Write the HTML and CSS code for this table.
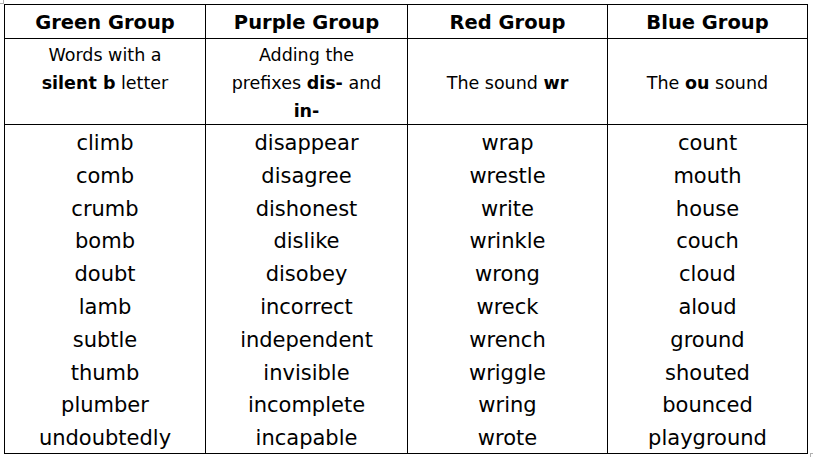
FILE: index.html
```html
<!DOCTYPE html>
<html lang="en">
<head>
<meta charset="utf-8">
<title>Spelling Groups</title>
<link rel="stylesheet" href="styles.css">
</head>
<body>
<div class="page">
  <span class="mark mark-tl"></span>
  <div class="grid">
    <div class="cell head"><p class="txt">Green Group</p></div>
    <div class="cell head"><p class="txt">Purple Group</p></div>
    <div class="cell head"><p class="txt">Red Group</p></div>
    <div class="cell head"><p class="txt">Blue Group</p></div>

    <div class="cell desc desc-top"><p class="txt">Words with a<br><b>silent b</b> letter</p></div>
    <div class="cell desc desc-top"><p class="txt">Adding the<br>prefixes <b>dis-</b> and<br><b>in-</b></p></div>
    <div class="cell desc"><p class="txt">The sound <b>wr</b></p></div>
    <div class="cell desc"><p class="txt">The <b>ou</b> sound</p></div>

    <div class="cell words"><p class="txt">climb<br>comb<br>crumb<br>bomb<br>doubt<br>lamb<br>subtle<br>thumb<br>plumber<br>undoubtedly</p></div>
    <div class="cell words"><p class="txt">disappear<br>disagree<br>dishonest<br>dislike<br>disobey<br>incorrect<br>independent<br>invisible<br>incomplete<br>incapable</p></div>
    <div class="cell words"><p class="txt">wrap<br>wrestle<br>write<br>wrinkle<br>wrong<br>wreck<br>wrench<br>wriggle<br>wring<br>wrote</p></div>
    <div class="cell words"><p class="txt">count<br>mouth<br>house<br>couch<br>cloud<br>aloud<br>ground<br>shouted<br>bounced<br>playground</p></div>
  </div>
  <span class="mark mark-br"></span>
</div>
</body>
</html>
```

FILE: styles.css
```css
html, body {
  margin: 0;
  padding: 0;
  background: #ffffff;
}

body {
  width: 813px;
  height: 458px;
  overflow: hidden;
  font-family: "DejaVu Sans", sans-serif;
  color: #000000;
}

.page {
  position: relative;
  padding: 4px 0 0 4px;
}

.grid {
  display: grid;
  grid-template-columns: 201px 202px 200px 200px;
  grid-template-rows: 34px 86px 329px;
  width: max-content;
  border-left: 1px solid #000;
  border-top: 1px solid #000;
}

.cell {
  border-right: 1px solid #000;
  border-bottom: 1px solid #000;
  text-align: center;
  display: flex;
  flex-direction: column;
  justify-content: center;
}

.txt {
  margin: 0;
}

.head {
  font-weight: bold;
  font-size: 19.5px;
  line-height: 24px;
  padding-top: 3px;
}

.desc {
  font-size: 17.5px;
  line-height: 28px;
  padding-top: 3px;
}

.desc-top {
  justify-content: flex-start;
  padding-top: 2px;
}

.desc b {
  font-weight: bold;
}

.words {
  font-size: 21px;
  line-height: 32.8px;
  justify-content: flex-start;
  padding-top: 2px;
}

.mark {
  position: absolute;
  width: 3px;
  height: 3px;
}

.mark-tl {
  left: 0;
  top: 0;
  border-right: 1px solid #b0b0b0;
  border-bottom: 1px solid #b0b0b0;
}

.mark-br {
  left: 810px;
  top: 453px;
  border-left: 1px solid #b0b0b0;
  border-top: 1px solid #b0b0b0;
}
```
